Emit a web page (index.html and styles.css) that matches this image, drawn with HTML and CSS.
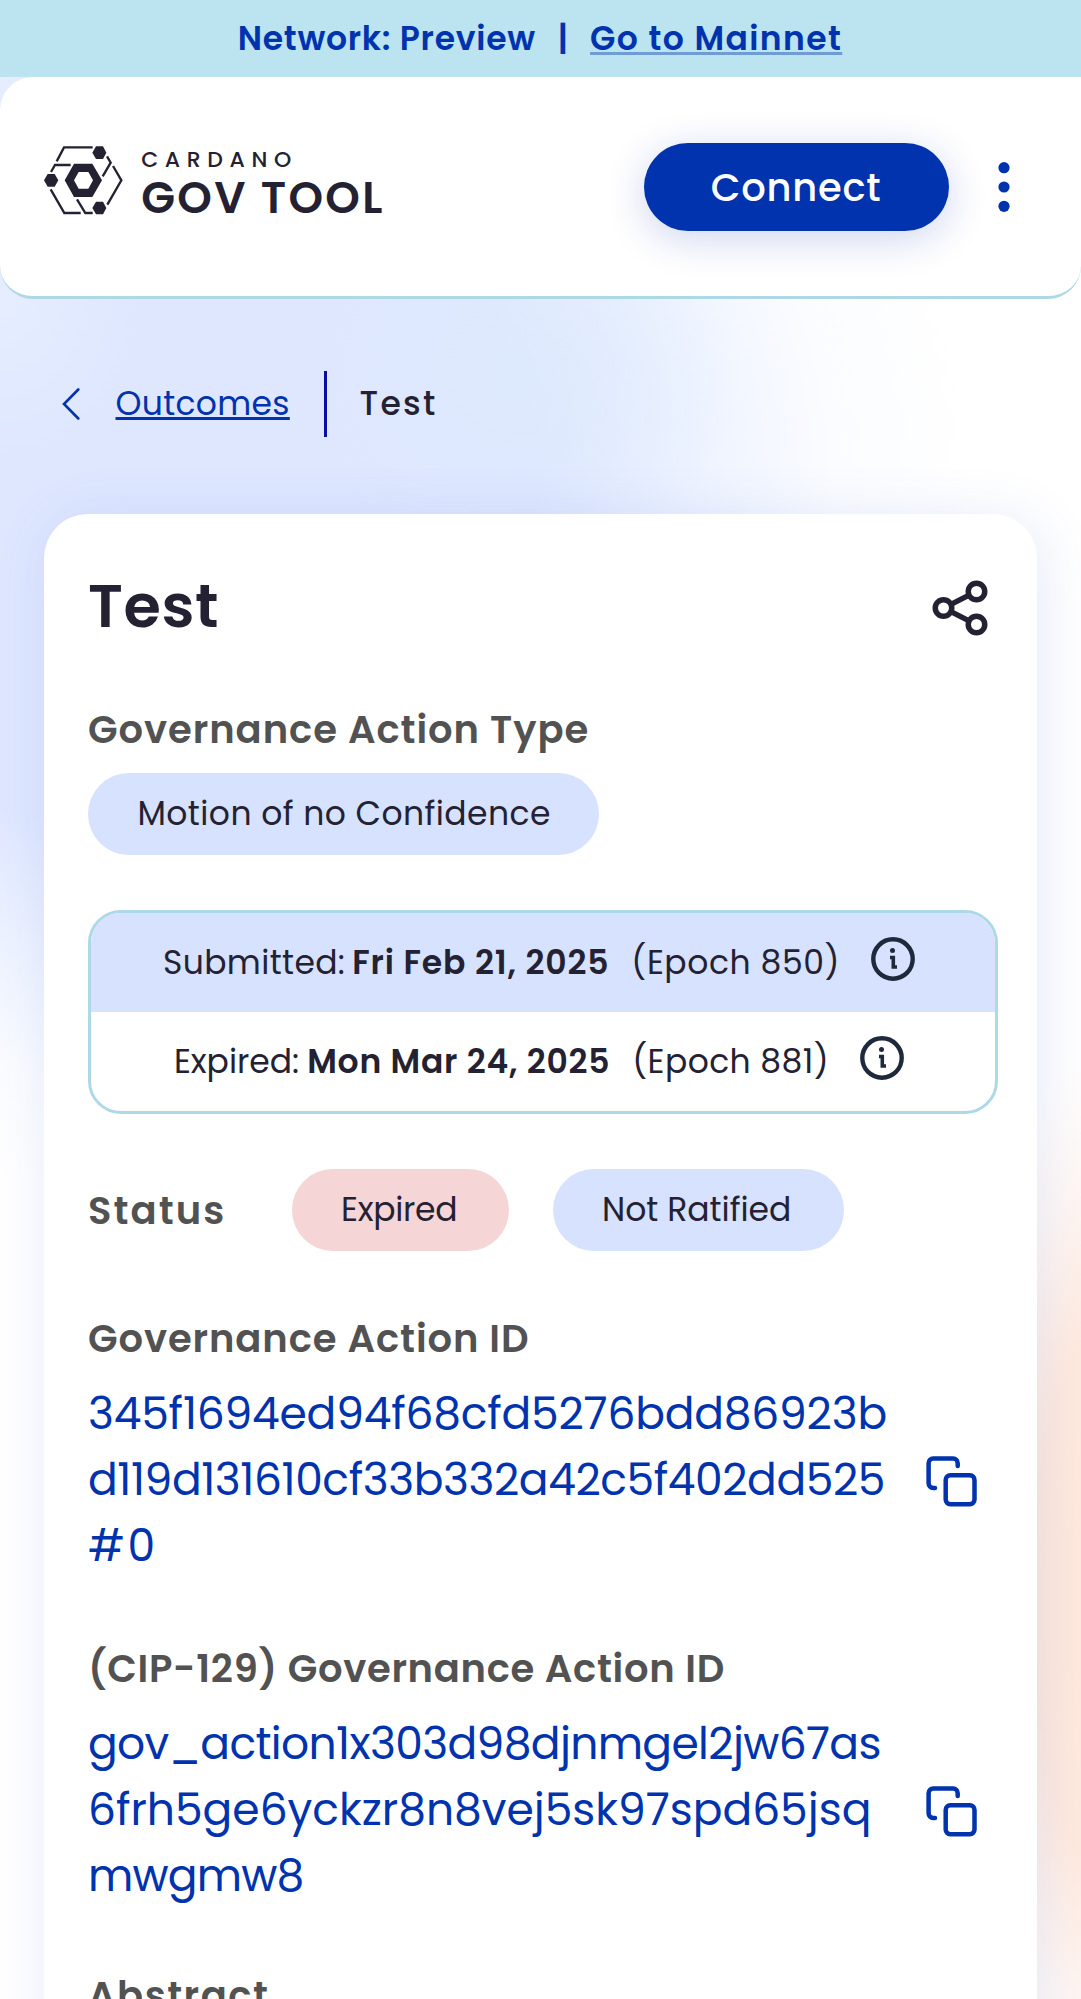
FILE: index.html
```
<!DOCTYPE html>
<html lang="en">
<head>
<meta charset="utf-8">
<title>Cardano GovTool</title>
<link rel="stylesheet" href="styles.css">
</head>
<body>
<div class="page">
  <div class="banner">
    <span class="network">Network: Preview</span>
    <span class="bar">|</span>
    <a class="mainnet">Go to Mainnet</a>
  </div>

  <header class="header">
    <div class="logo">
      <svg class="logo-mark" viewBox="42 47 236 206" fill="none" stroke="#242232" stroke-width="7">
        <path d="M80 93L102 51H188M63 125L75 104H122M231 78L242 97L218 138M249 107L274 150L232 223M62 177L103 248H152M141 207L166 248H188"/>
        <g fill="#242232" stroke="none">
          <path d="M187 67l11-19h21l10 19-10 19h-21zM42 150l11-19h21l11 19-11 19H53zM187 233l11-19h21l10 19-10 19h-21z"/>
          <path fill-rule="evenodd" d="M104 150l28-50h55l29 50-29 50h-55zM132 150l14 25h29l14-25-14-25h-29z"/>
        </g>
      </svg>
      <div class="logo-text">
        <span class="logo-top">CARDANO</span>
        <span class="logo-bottom">GOV TOOL</span>
      </div>
    </div>
    <div class="actions">
      <button class="connect">Connect</button>
      <svg class="dots" viewBox="0 0 12 50" fill="#0033ad"><circle cx="6" cy="5.7" r="5.6"/><circle cx="6" cy="25" r="5.6"/><circle cx="6" cy="44.3" r="5.6"/></svg>
    </div>
  </header>

  <nav class="crumbs">
    <svg class="chevron" viewBox="0 0 18 32" fill="none" stroke="#0033ad" stroke-width="2.6" stroke-linecap="round"><path d="M16.3 1.5L2 16L16.3 30.5"/></svg>
    <a class="crumb-link">Outcomes</a>
    <span class="divider"></span>
    <span class="crumb-current">Test</span>
  </nav>

  <main class="card">
    <div class="title-row">
      <h1 class="title">Test</h1>
      <svg class="share" viewBox="0 0 24 24" fill="none" stroke="#242232" stroke-width="2"><circle cx="18" cy="6" r="3"/><circle cx="6" cy="12" r="3"/><circle cx="18" cy="18" r="3"/><path d="M8.700 10.700L15.300 7.300M8.700 13.300L15.300 16.700"/></svg>
    </div>

    <h2 class="label label-type">Governance Action Type</h2>
    <div class="chip chip-type">Motion of no Confidence</div>

    <div class="dates">
      <div class="date-row submitted">
        <span class="date-name">Submitted:</span><b class="date-value">Fri Feb 21, 2025</b><span class="epoch">(Epoch 850)</span>
        <svg class="info" viewBox="0 0 44 44" fill="none" stroke="#1e293b"><circle cx="22" cy="22" r="19.700" stroke-width="4.400"/><path d="M19 20.500H22.300V30H26" stroke-width="3.600"/><circle cx="21.500" cy="13.500" r="2.500" fill="#1e293b" stroke="none"/></svg>
      </div>
      <div class="date-row expired">
        <span class="date-name">Expired:</span><b class="date-value">Mon Mar 24, 2025</b><span class="epoch">(Epoch 881)</span>
        <svg class="info" viewBox="0 0 44 44" fill="none" stroke="#1e293b"><circle cx="22" cy="22" r="19.700" stroke-width="4.400"/><path d="M19 20.500H22.300V30H26" stroke-width="3.600"/><circle cx="21.500" cy="13.500" r="2.500" fill="#1e293b" stroke="none"/></svg>
      </div>
    </div>

    <div class="status-row">
      <h2 class="label label-status">Status</h2>
      <div class="chip chip-expired">Expired</div>
      <div class="chip chip-ratified">Not Ratified</div>
    </div>

    <h2 class="label">Governance Action ID</h2>
    <div class="id-row">
      <div class="id">
        <span class="hash-1">345f1694ed94f68cfd5276bdd86923b</span>
        <span class="hash-2">d119d131610cf33b332a42c5f402dd525</span>
        <span class="hash-3">#0</span>
      </div>
      <svg class="copy" viewBox="0 0 55 55" fill="none" stroke="#0033ad" stroke-width="4.500" stroke-linecap="round"><rect x="21.700" y="21.300" width="28.800" height="28.900" rx="4.600"/><path d="M33.700 12V9.200a4.600 4.600 0 0 0-4.600-4.600H9.200a4.600 4.600 0 0 0-4.600 4.600V29.300a4.600 4.600 0 0 0 4.600 4.600H11"/></svg>
    </div>

    <h2 class="label label-cip">(CIP-129) Governance Action ID</h2>
    <div class="id-row">
      <div class="id">
        <span class="cip-1">gov_action1x303d98djnmgel2jw67as</span>
        <span class="cip-2">6frh5ge6yckzr8n8vej5sk97spd65jsq</span>
        <span class="cip-3">mwgmw8</span>
      </div>
      <svg class="copy" viewBox="0 0 55 55" fill="none" stroke="#0033ad" stroke-width="4.500" stroke-linecap="round"><rect x="21.700" y="21.300" width="28.800" height="28.900" rx="4.600"/><path d="M33.700 12V9.200a4.600 4.600 0 0 0-4.600-4.600H9.200a4.600 4.600 0 0 0-4.600 4.600V29.300a4.600 4.600 0 0 0 4.600 4.600H11"/></svg>
    </div>

    <h2 class="label label-abstract">Abstract</h2>
  </main>
</div>
</body>
</html>
```

FILE: styles.css
```
* { box-sizing: border-box; }
body {
  margin: 0;
  font-family: Poppins, Inter, "Open Sans", sans-serif;
  font-size: 33px;
  color: #242232;
}
h1, h2 { margin: 0; }
svg { display: block; flex: none; }
span, b, a { white-space: nowrap; }

.page {
  height: 1999px;
  overflow: hidden;
  background:
    radial-gradient(ellipse 165px 560px at 1115px 1600px, #ffe8da 0%, #ffeade 50%, rgba(255, 243, 237, .6) 78%, rgba(255, 255, 255, 0) 100%),
    radial-gradient(ellipse 220px 200px at 520px 370px, rgba(220, 234, 252, .7) 0%, rgba(220, 234, 252, 0) 100%),
    radial-gradient(ellipse 140px 160px at 0 300px, rgba(232, 240, 255, .7) 0%, rgba(232, 240, 255, 0) 100%),
    radial-gradient(ellipse 850px 720px at 130px 480px, #dfe7ff 0%, #dfe7ff 48%, rgba(232, 239, 255, .85) 64%, rgba(246, 249, 255, .5) 83%, rgba(255, 255, 255, 0) 100%),
    #fff;
}

.banner {
  height: 77px;
  background: #bbe3f0;
  color: #0033ad;
  font-weight: 600;
  display: flex;
  align-items: center;
  justify-content: center;
  padding-right: 1px;
}
.network { letter-spacing: .73px; }
.bar { margin: 0 22px; }
.mainnet {
  letter-spacing: 1.4px;
  text-decoration: underline;
  text-decoration-color: rgba(0, 51, 173, .4);
  text-decoration-thickness: 2.75px;
}

.header {
  height: 222px;
  background: #fff;
  border-bottom: 3px solid #add8e6;
  border-radius: 33px;
  display: flex;
  justify-content: space-between;
  padding: 66px 71px 0 44px;
}
.logo { display: flex; padding-top: 3px; }
.logo-mark { width: 78.7px; height: 68.7px; }
.logo-text { display: flex; flex-direction: column; margin-left: 18.5px; }
.logo-top { font-size: 22px; font-weight: 500; letter-spacing: 6.61px; line-height: 28px; }
.logo-bottom { font-size: 44px; font-weight: 600; letter-spacing: 2.35px; line-height: 48px; }
.actions { display: flex; height: 88px; align-items: center; gap: 49px; }
.connect {
  width: 305px;
  height: 88px;
  border: 0;
  border-radius: 44px;
  background: #0033ad;
  color: #fff;
  font: 500 38.5px Poppins, Inter, sans-serif;
  letter-spacing: .72px;
  padding: 0 1px 0 0;
  box-shadow: 0 8px 41px rgba(0, 51, 173, .2);
}
.dots { width: 12px; height: 50px; }

.crumbs { display: flex; align-items: center; height: 66px; margin: 72px 0 77px 62px; }
.chevron { width: 18px; height: 32px; }
.crumb-link {
  color: #0033ad;
  letter-spacing: .3px;
  margin: 0 32px 1px 35.5px;
  padding-right: 2px;
  text-decoration: underline;
  text-decoration-thickness: 2.75px;
}
.divider { width: 2.75px; height: 66px; background: #080da3; }
.crumb-current { font-weight: 500; letter-spacing: 2.3px; margin: 0 0 1px 33px; }

.card {
  margin: 0 44px;
  height: 1600px;
  padding: 44px 39px 0 44px;
  border-radius: 44px;
  background: #fff;
  box-shadow: 5px 5px 55px rgba(60, 90, 210, .13);
}
.title-row { display: flex; justify-content: space-between; align-items: center; height: 94px; padding-right: 5px; }
.title { font-size: 60.5px; font-weight: 600; letter-spacing: .6px; line-height: 92px; padding-top: 2px; }
.share { width: 66px; height: 66px; margin-top: 5px; }

.label { color: #525252; font-size: 38.5px; font-weight: 600; line-height: 44px; letter-spacing: .9px; white-space: nowrap; }
.label-type { letter-spacing: .94px; margin-top: 56px; }
.chip {
  height: 82px;
  border-radius: 41px;
  background: #d6e2ff;
  padding: 0 49.5px;
  line-height: 81px;
  white-space: nowrap;
}
.chip-type { width: 511px; letter-spacing: .42px; margin-top: 21px; }

.dates { height: 203.5px; margin-top: 55px; border: 3px solid #add8e6; border-radius: 33px; overflow: hidden; }
.date-row { height: 99px; display: flex; align-items: center; justify-content: center; padding: 1px 8px 0 0; }
.date-value { font-weight: 600; }
.epoch { margin-left: 22px; }
.info { width: 44px; height: 44px; margin: 0 0 8px 31px; }
.submitted { background: #d6e2ff; }
.submitted .date-name { letter-spacing: .35px; }
.submitted .date-value { letter-spacing: .85px; margin-left: 7px; }
.submitted .epoch { letter-spacing: .55px; }
.expired .date-value { letter-spacing: .75px; margin-left: 8px; }
.expired .epoch { letter-spacing: .4px; }

.status-row { display: flex; align-items: center; margin: 55px 0 66px; }
.label-status { width: 203.5px; letter-spacing: 2.1px; padding-top: 2px; }
.chip-expired { width: 217px; background: #f5d5d5; letter-spacing: -.3px; margin-right: 44px; }
.chip-ratified { width: 291px; }

.id-row { display: flex; align-items: center; justify-content: space-between; margin-top: 20.5px; }
.id { display: flex; flex-direction: column; width: 803px; font-size: 44px; line-height: 66px; color: #0033ad; }
.copy { width: 55px; height: 55px; margin: 3px 18.8px 0 0; }
.hash-1 { letter-spacing: -.2px; }
.hash-2 { letter-spacing: -.43px; }
.hash-3 { letter-spacing: 2.54px; }
.label-cip { letter-spacing: .69px; margin-top: 67.5px; }
.cip-1 { letter-spacing: -.64px; }
.cip-2 { letter-spacing: 0; }
.cip-3 { letter-spacing: -.81px; }
.label-abstract { letter-spacing: 1.5px; margin-top: 64.5px; }
```
